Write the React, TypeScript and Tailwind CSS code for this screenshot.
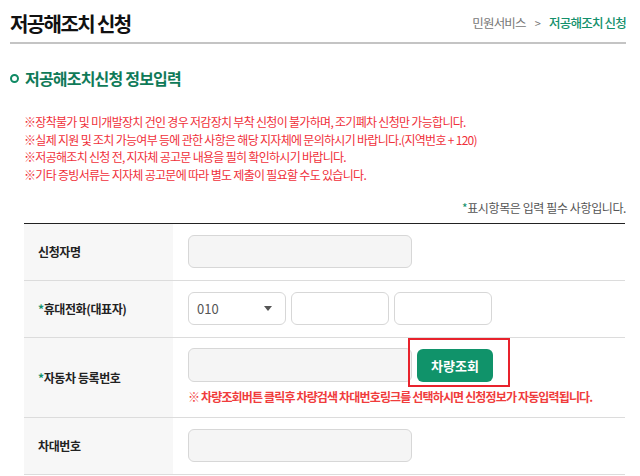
export default function App() {
  const notes = [
    '※장착불가 및 미개발장치 건인 경우 저감장치 부착 신청이 불가하며, 조기폐차 신청만 가능합니다.',
    '※실제 지원 및 조치 가능여부 등에 관한 사항은 해당 지자체에 문의하시기 바랍니다.(지역번호 + 120)',
    '※저공해조치 신청 전, 지자체 공고문 내용을 필히 확인하시기 바랍니다.',
    '※기타 증빙서류는 지자체 공고문에 따라 별도 제출이 필요할 수도 있습니다.',
  ];

  return (
    <div className="w-[640px] bg-white pl-[10px] pr-[14px] font-['Noto_Sans_CJK_KR',sans-serif] text-[#222]">
      {/* header */}
      <div className="flex h-[44px] items-center justify-between border-b-2 border-[#c4c4c4]">
        <h1 className="mt-[6px] text-[20px] leading-[26px] font-bold tracking-[-1.6px] text-[#111]">저공해조치 신청</h1>
        <div className="mt-[4px] flex items-center gap-[9px] text-[12.5px] tracking-[-0.8px] text-[#777]">
          <span>민원서비스</span>
          <span className="text-[11px]">&gt;</span>
          <span className="font-medium text-[#13906b]">저공해조치 신청</span>
        </div>
      </div>

      {/* section title */}
      <div className="mt-[22px] flex items-center gap-[6px]">
        <span className="h-[9px] w-[9px] rounded-full border-[2.5px] border-[#0f8a64]"></span>
        <h2 className="text-[16px] leading-[24px] font-bold tracking-[-0.8px] text-[#0f7a58]">저공해조치신청 정보입력</h2>
      </div>

      <div className="mt-[23px] pl-[14px] text-[12px] leading-[17.5px] tracking-[-0.7px] text-[#f0303a]">
        {notes.map((n) => (
          <p key={n}>{n}</p>
        ))}
      </div>

      <p className="mt-[16px] text-right text-[12px] leading-[18px] tracking-[-0.4px] text-[#555]">
        <span className="text-[#13906b]">*</span>표시항목은 입력 필수 사항입니다.
      </p>

      {/* form table */}
      <div className="mt-[6px] ml-[14px] mr-px border-t-[1.5px] border-[#222]">
        <div className="flex border-b border-[#dcdcdc]">
          <div className="flex w-[149px] items-center bg-[#f7f7f7] pl-[14px] text-[12px] font-bold tracking-[-0.4px]">신청자명</div>
          <div className="pt-[11px] pb-[12px] pl-[15px]">
            <div className="h-[33px] w-[224px] rounded-[6px] border border-[#d7d7d7] bg-[#f5f5f5]"></div>
          </div>
        </div>

        <div className="flex border-b border-[#dcdcdc]">
          <div className="flex w-[149px] items-center bg-[#f7f7f7] pl-[14px] text-[12px] font-bold tracking-[-0.4px]">
            <span className="text-[#13906b]">*</span>휴대전화(대표자)
          </div>
          <div className="flex gap-[5px] pt-[11px] pb-[12px] pl-[15px]">
            <div className="flex h-[33px] w-[98px] items-center justify-between rounded-[6px] border border-[#d7d7d7] bg-white pl-[8px] pr-[13px] text-[13px] text-[#555]">
              <span>010</span>
              <svg width="8" height="5" viewBox="0 0 8 5">
                <path d="M0 0H8L4 5Z" fill="#555" />
              </svg>
            </div>
            <div className="h-[33px] w-[98px] rounded-[6px] border border-[#d7d7d7] bg-white"></div>
            <div className="h-[33px] w-[98px] rounded-[6px] border border-[#d7d7d7] bg-white"></div>
          </div>
        </div>

        <div className="flex border-b border-[#dcdcdc]">
          <div className="flex w-[149px] items-center bg-[#f7f7f7] pl-[14px] text-[12px] font-bold tracking-[-0.4px]">
            <span className="text-[#13906b]">*</span>자동차 등록번호
          </div>
          <div className="relative pt-[10px] pb-[11px] pl-[15px]">
            <div className="flex items-start gap-[5px]">
              <div className="h-[34px] w-[224px] rounded-[6px] border border-[#d7d7d7] bg-[#f5f5f5]"></div>
              <button className="mt-px h-[33px] w-[76px] rounded-[6px] bg-[#10936a] text-[13px] font-bold text-white">차량조회</button>
            </div>
            <div className="absolute top-0 left-[235px] h-[49px] w-[102px] border-2 border-[#e8222c]"></div>
            <p className="mt-[6px] text-[12px] leading-[18px] font-bold tracking-[-0.85px] whitespace-nowrap text-[#f03c3c]">
              ※ 차량조회버튼 클릭후 차량검색 차대번호링크를 선택하시면 신청정보가 자동입력됩니다.
            </p>
          </div>
        </div>

        <div className="flex border-b border-[#dcdcdc]">
          <div className="flex w-[149px] items-center bg-[#f7f7f7] pl-[14px] text-[12px] font-bold tracking-[-0.4px]">차대번호</div>
          <div className="pt-[11px] pb-[12px] pl-[15px]">
            <div className="h-[33px] w-[224px] rounded-[6px] border border-[#d7d7d7] bg-[#f5f5f5]"></div>
          </div>
        </div>
      </div>
    </div>
  );
}
